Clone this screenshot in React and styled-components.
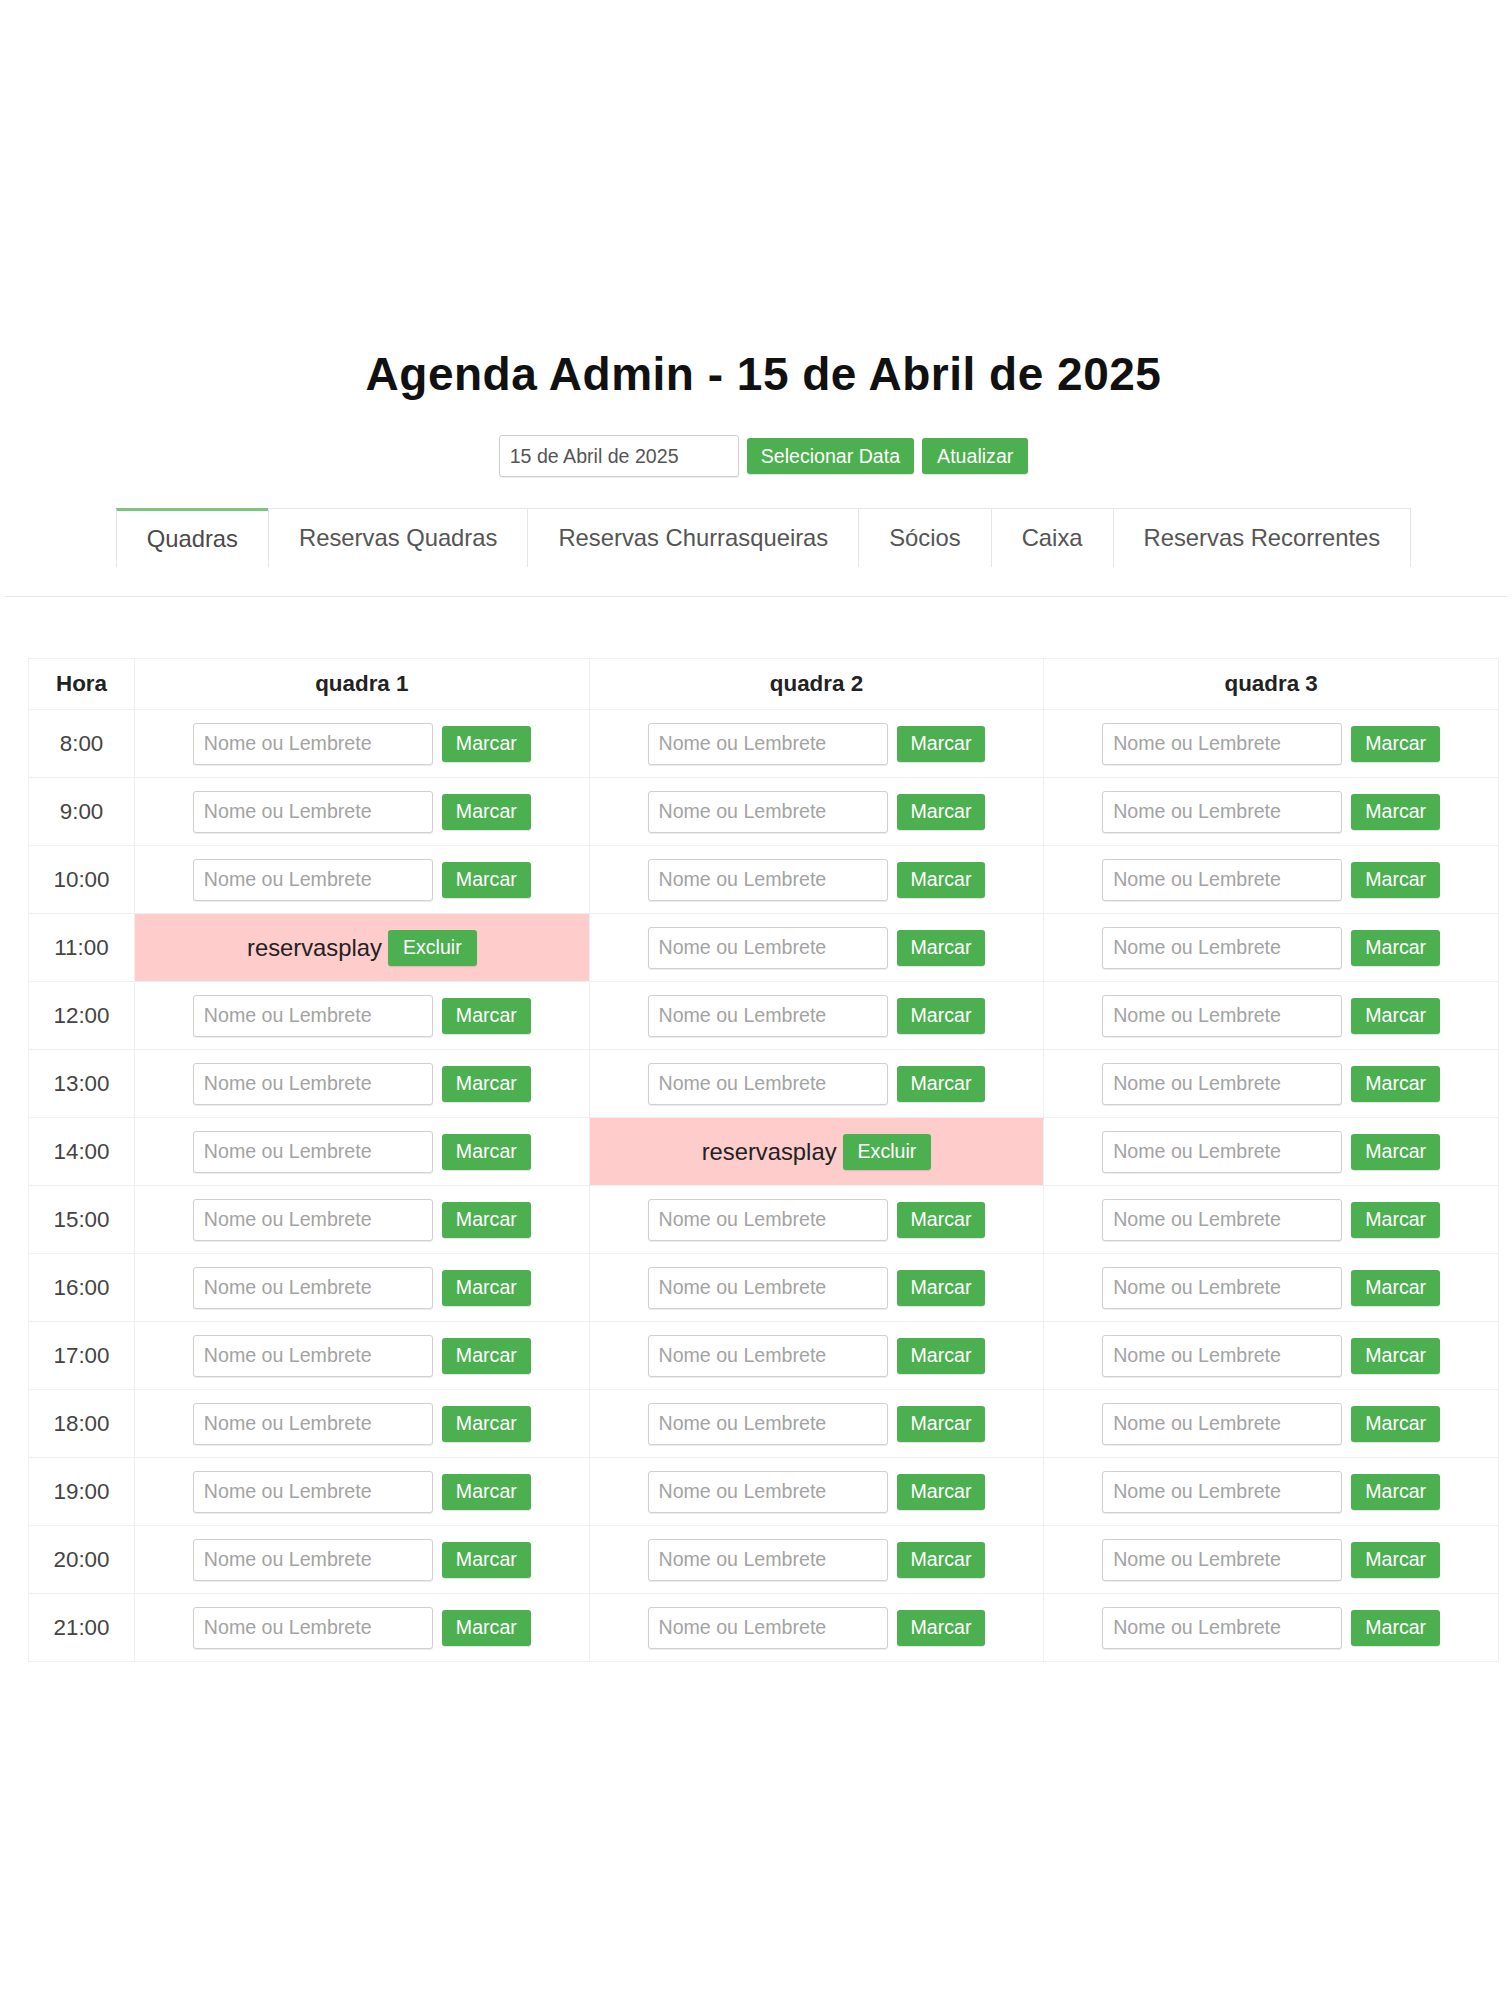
import React from 'react';
import styled, { createGlobalStyle } from 'styled-components';

const GlobalStyle = createGlobalStyle`
  body {
    margin: 0;
    background: #fff;
    font-family: "Liberation Sans", Arial, sans-serif;
  }
`;

const Page = styled.div`
  padding-top: 348px;
  padding-bottom: 340px;
`;

const Container = styled.div`
  padding: 0 13px 0 28px;
`;

const Title = styled.h1`
  margin: 0;
  text-align: center;
  font-size: 46px;
  line-height: 53px;
  letter-spacing: 0.5px;
  font-weight: bold;
  color: #111;
`;

const Controls = styled.div`
  margin-top: 34px;
  display: flex;
  justify-content: center;
  align-items: center;
  gap: 8px;
`;

const TextInput = styled.input`
  box-sizing: border-box;
  width: 240px;
  height: 42px;
  padding: 0 10px;
  border: 1px solid #cfcfcf;
  border-radius: 3px;
  box-shadow: 0 1px 1px rgba(0, 0, 0, 0.08);
  font-family: inherit;
  font-size: 19.6px;
  color: #555;
  background: #fff;
  outline: none;

  &::placeholder {
    color: #a3a3a3;
  }
`;

const GreenButton = styled.button`
  height: 36px;
  padding: 0 ${(p) => (p.$wide ? 15 : 14)}px;
  border: none;
  border-radius: 3px;
  background: #4caf50;
  color: #fff;
  font-family: inherit;
  font-size: 19.6px;
  box-shadow: 0 1px 1px rgba(0, 0, 0, 0.12);
  cursor: pointer;
`;

const TabBar = styled.div`
  margin-top: 31px;
  display: flex;
  justify-content: center;
  align-items: stretch;
`;

const Tab = styled.div`
  padding: ${(p) => (p.$active ? '14px' : '15px')} 30px 14px;
  font-size: 23.8px;
  line-height: 28px;
  color: ${(p) => (p.$active ? '#4a4a4a' : '#555')};
  background: #fff;
  border-top: ${(p) => (p.$active ? '3px solid #7cc47f' : '1px solid #e6e6e6')};
  border-left: 1px solid #e6e6e6;
  &:last-child {
    border-right: 1px solid #e6e6e6;
  }
`;

const Divider = styled.div`
  margin: 29px 5px 0;
  height: 1px;
  background: #e6e6e6;
`;

const Table = styled.table`
  margin-top: 61px;
  width: 100%;
  border-collapse: collapse;
  table-layout: fixed;
`;

const HeadCell = styled.th`
  height: 50px;
  padding: 0;
  border: 1px solid #efefef;
  font-size: 22.4px;
  font-weight: bold;
  color: #222;
  text-align: center;
`;

const HourCell = styled.td`
  height: 67px;
  padding: 0;
  border: 1px solid #efefef;
  font-size: 22.4px;
  color: #444;
  text-align: center;
`;

const SlotCell = styled.td`
  height: 67px;
  padding: 0;
  border: 1px solid #efefef;
  background: ${(p) => (p.$booked ? '#ffcccc' : '#fff')};
`;

const SlotRow = styled.div`
  display: flex;
  justify-content: center;
  align-items: center;
  gap: ${(p) => (p.$booked ? 6 : 9)}px;
`;

const BookedName = styled.span`
  font-size: 23.8px;
  color: #222;
`;

const courts = ['quadra 1', 'quadra 2', 'quadra 3'];
const hours = [8, 9, 10, 11, 12, 13, 14, 15, 16, 17, 18, 19, 20, 21];
const bookings = { '11-0': 'reservasplay', '14-1': 'reservasplay' };
const tabs = ['Quadras', 'Reservas Quadras', 'Reservas Churrasqueiras', 'Sócios', 'Caixa', 'Reservas Recorrentes'];

const App = () => {
  return (
    <>
      <GlobalStyle />
      <Page>
        <Container>
          <Title>Agenda Admin - 15 de Abril de 2025</Title>
          <Controls>
            <TextInput defaultValue="15 de Abril de 2025" readOnly />
            <GreenButton>Selecionar Data</GreenButton>
            <GreenButton $wide>Atualizar</GreenButton>
          </Controls>
          <TabBar>
            {tabs.map((t, i) => (
              <Tab key={t} $active={i === 0}>{t}</Tab>
            ))}
          </TabBar>
        </Container>
        <Divider />
        <Container>
          <Table>
            <colgroup>
              <col style={{ width: '106px' }} />
              <col />
              <col />
              <col />
            </colgroup>
            <thead>
              <tr>
                <HeadCell>Hora</HeadCell>
                {courts.map((c) => <HeadCell key={c}>{c}</HeadCell>)}
              </tr>
            </thead>
            <tbody>
              {hours.map((h) => (
                <tr key={h}>
                  <HourCell>{h}:00</HourCell>
                  {courts.map((c, i) => {
                    const name = bookings[`${h}-${i}`];
                    if (name) {
                      return (
                        <SlotCell key={c} $booked>
                          <SlotRow $booked>
                            <BookedName>{name}</BookedName>
                            <GreenButton $wide>Excluir</GreenButton>
                          </SlotRow>
                        </SlotCell>
                      );
                    }
                    return (
                      <SlotCell key={c}>
                        <SlotRow>
                          <TextInput placeholder="Nome ou Lembrete" />
                          <GreenButton>Marcar</GreenButton>
                        </SlotRow>
                      </SlotCell>
                    );
                  })}
                </tr>
              ))}
            </tbody>
          </Table>
        </Container>
      </Page>
    </>
  );
};

export default App;
